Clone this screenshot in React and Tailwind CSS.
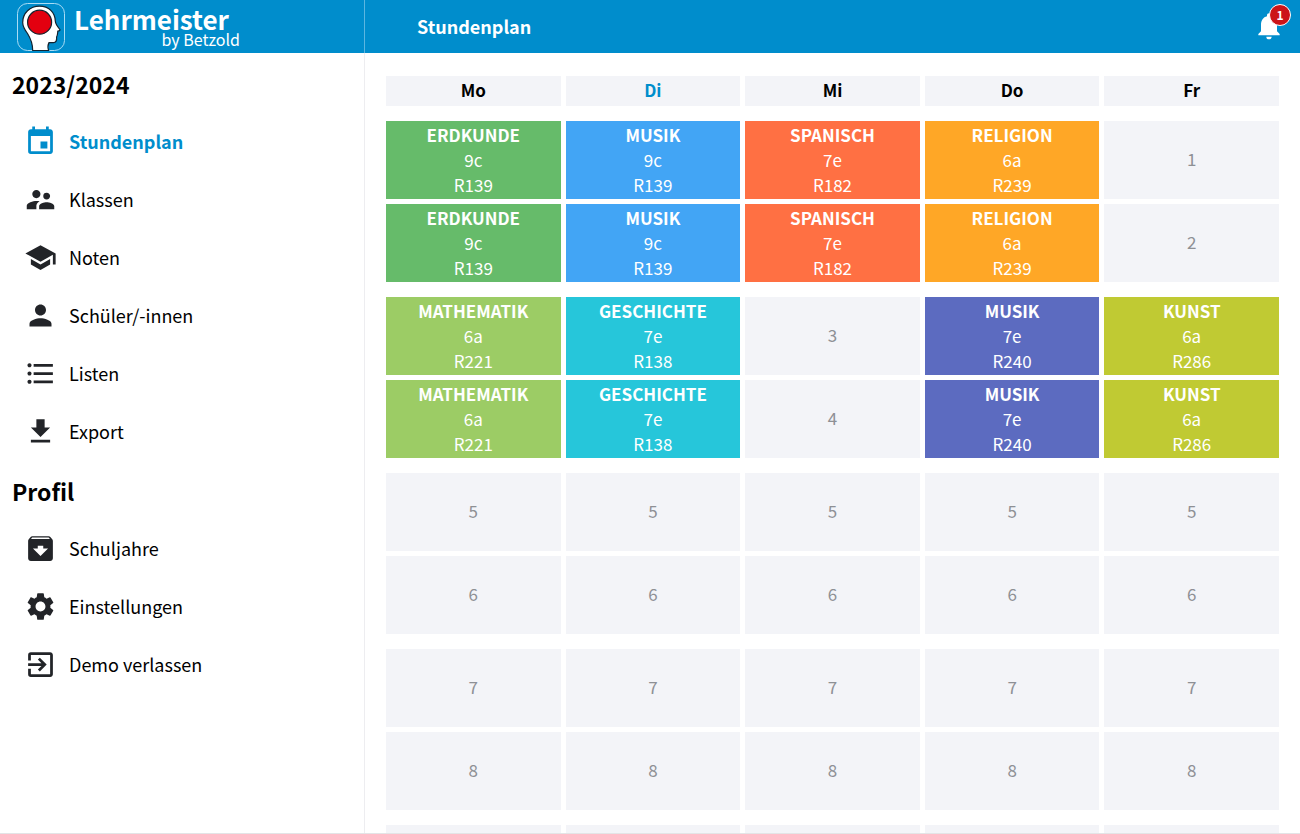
import { useState } from "react";
import {
  MdArchive,
  MdEvent,
  MdExitToApp,
  MdFileDownload,
  MdFormatListBulleted,
  MdNotifications,
  MdPerson,
  MdSchool,
  MdSettings,
  MdSupervisorAccount,
} from "react-icons/md";

const sections = [
  {
    title: "2023/2024",
    items: [
      { label: "Stundenplan", icon: MdEvent },
      { label: "Klassen", icon: MdSupervisorAccount },
      { label: "Noten", icon: MdSchool },
      { label: "Schüler/-innen", icon: MdPerson },
      { label: "Listen", icon: MdFormatListBulleted },
      { label: "Export", icon: MdFileDownload },
    ],
  },
  {
    title: "Profil",
    items: [
      { label: "Schuljahre", icon: MdArchive },
      { label: "Einstellungen", icon: MdSettings },
      { label: "Demo verlassen", icon: MdExitToApp },
    ],
  },
];

const days = ["Mo", "Di", "Mi", "Do", "Fr"];
const today = "Di";
const lastHour = 8;

const erdkunde = { subject: "Erdkunde", group: "9c", room: "R139", color: "bg-[#66bb6a]" };
const musik9 = { subject: "Musik", group: "9c", room: "R139", color: "bg-[#42a5f5]" };
const spanisch = { subject: "Spanisch", group: "7e", room: "R182", color: "bg-[#ff7043]" };
const religion = { subject: "Religion", group: "6a", room: "R239", color: "bg-[#ffa726]" };
const mathe = { subject: "Mathematik", group: "6a", room: "R221", color: "bg-[#9ccc65]" };
const geschichte = { subject: "Geschichte", group: "7e", room: "R138", color: "bg-[#26c6da]" };
const musik7 = { subject: "Musik", group: "7e", room: "R240", color: "bg-[#5c6bc0]" };
const kunst = { subject: "Kunst", group: "6a", room: "R286", color: "bg-[#c0ca33]" };

const free = [null, null, null, null, null];

// two lessons per block, a break between the blocks
const blocks = [
  [
    [erdkunde, musik9, spanisch, religion, null],
    [erdkunde, musik9, spanisch, religion, null],
  ],
  [
    [mathe, geschichte, null, musik7, kunst],
    [mathe, geschichte, null, musik7, kunst],
  ],
  [free, free],
  [free, free],
  [free],
];

function Logo() {
  return (
    <svg viewBox="0 0 50 50" className="size-[50px] shrink-0" aria-hidden="true">
      <rect x="1.5" y="1.5" width="47" height="47" rx="10" fill="none" stroke="#a9dcf5" />
      <path
        d="M16.700 48.5C16.700 42 15 37 11.500 31.500C8.500 27.500 6.700 24.500 6.700 20.500C6.700 11 14 4.200 23.500 4.200C33 4.200 39 10.500 39.300 19C39.400 21.500 41 24 43.800 27.300C44.500 28.300 43.500 29 41.800 29.200C41.600 31.500 41.600 33.500 40.600 35C40.900 38.500 40 40.600 37.500 40.600H33C31.700 43 31.700 46 32.600 48.500Z"
        fill="#fff"
        stroke="#12222e"
        strokeWidth="1.2"
      />
      <circle cx="23.6" cy="20.2" r="12" fill="#e3000f" stroke="#12222e" strokeWidth="1.2" />
    </svg>
  );
}

function Lesson({ lesson, hour }) {
  if (!lesson) {
    return (
      <td className="flex h-[78px] items-center justify-center bg-[#f3f4f8] pb-0.5 text-[17px] text-[#8e9095]">
        {hour <= lastHour && hour}
      </td>
    );
  }

  return (
    <td
      className={`flex h-[78px] flex-col items-center justify-center pb-0.5 text-[17px] leading-[25px] text-white ${lesson.color}`}
    >
      <strong className="font-bold uppercase">{lesson.subject}</strong>
      <span>{lesson.group}</span>
      <span>{lesson.room}</span>
    </td>
  );
}

export default function App() {
  const [active, setActive] = useState("Stundenplan");

  return (
    <div className="flex h-screen flex-col overflow-hidden border-b border-[#e3e4e6] bg-white font-['Noto_Sans_CJK_SC','Noto_Sans',sans-serif] text-black">
      {/* HEADER */}
      <header className="flex h-[53px] shrink-0 bg-[#008dcc] text-white">
        <div className="flex w-[365px] shrink-0 items-center gap-2 border-r border-[#5cb6e0] pl-4">
          <Logo />
          <div className="flex w-[166px] flex-col">
            <span className="text-[26px] leading-6 font-bold">Lehrmeister</span>
            <span className="self-end text-base leading-4">by Betzold</span>
          </div>
        </div>

        <div className="flex flex-1 items-center justify-between pr-[15px] pb-0.5 pl-[52px]">
          <h1 className="text-lg font-bold">{active}</h1>
          <button className="relative" aria-label="Benachrichtigungen">
            <MdNotifications size={32} />
            <span className="absolute -top-1.5 -right-1.5 flex size-[22px] items-center justify-center rounded-full border border-white bg-[#cc1418] text-xs font-bold">
              1
            </span>
          </button>
        </div>
      </header>

      <div className="flex min-h-0 flex-1">
        {/* SIDEBAR */}
        <nav className="flex w-[365px] shrink-0 flex-col gap-[3px] border-r border-[#ededf0] pt-[3px]">
          {sections.map((section) => (
            <section key={section.title}>
              <h2 className="flex h-14 items-center pl-3 text-[23px] font-bold">
                {section.title}
              </h2>
              <ul>
                {section.items.map(({ label, icon: Icon }) => (
                  <li key={label}>
                    <a
                      href="#"
                      onClick={() => setActive(label)}
                      className={`flex h-[58px] items-center gap-3 pl-6 text-lg ${
                        active === label ? "font-bold text-[#008dcc]" : ""
                      }`}
                    >
                      <Icon
                        size={33}
                        className={active === label ? "text-[#008dcc]" : "text-[#222428]"}
                      />
                      {label}
                    </a>
                  </li>
                ))}
              </ul>
            </section>
          ))}
        </nav>

        {/* TIMETABLE */}
        <main className="flex-1 overflow-y-auto px-[21px] pt-[23px] [scrollbar-width:none]">
          <table className="flex flex-col gap-[15px]">
            <thead className="block">
              <tr className="grid grid-cols-5 gap-[5px]">
                {days.map((day) => (
                  <th
                    key={day}
                    className={`flex h-[30px] items-center justify-center bg-[#f3f4f8] pb-0.5 text-[17px] font-bold ${
                      day === today ? "text-[#008dcc]" : ""
                    }`}
                  >
                    {day}
                  </th>
                ))}
              </tr>
            </thead>
            {blocks.map((rows, b) => (
              <tbody key={b} className="grid gap-[5px]">
                {rows.map((row, r) => (
                  <tr key={r} className="grid grid-cols-5 gap-[5px]">
                    {row.map((lesson, d) => (
                      <Lesson key={days[d]} lesson={lesson} hour={b * 2 + r + 1} />
                    ))}
                  </tr>
                ))}
              </tbody>
            ))}
          </table>
        </main>
      </div>
    </div>
  );
}
